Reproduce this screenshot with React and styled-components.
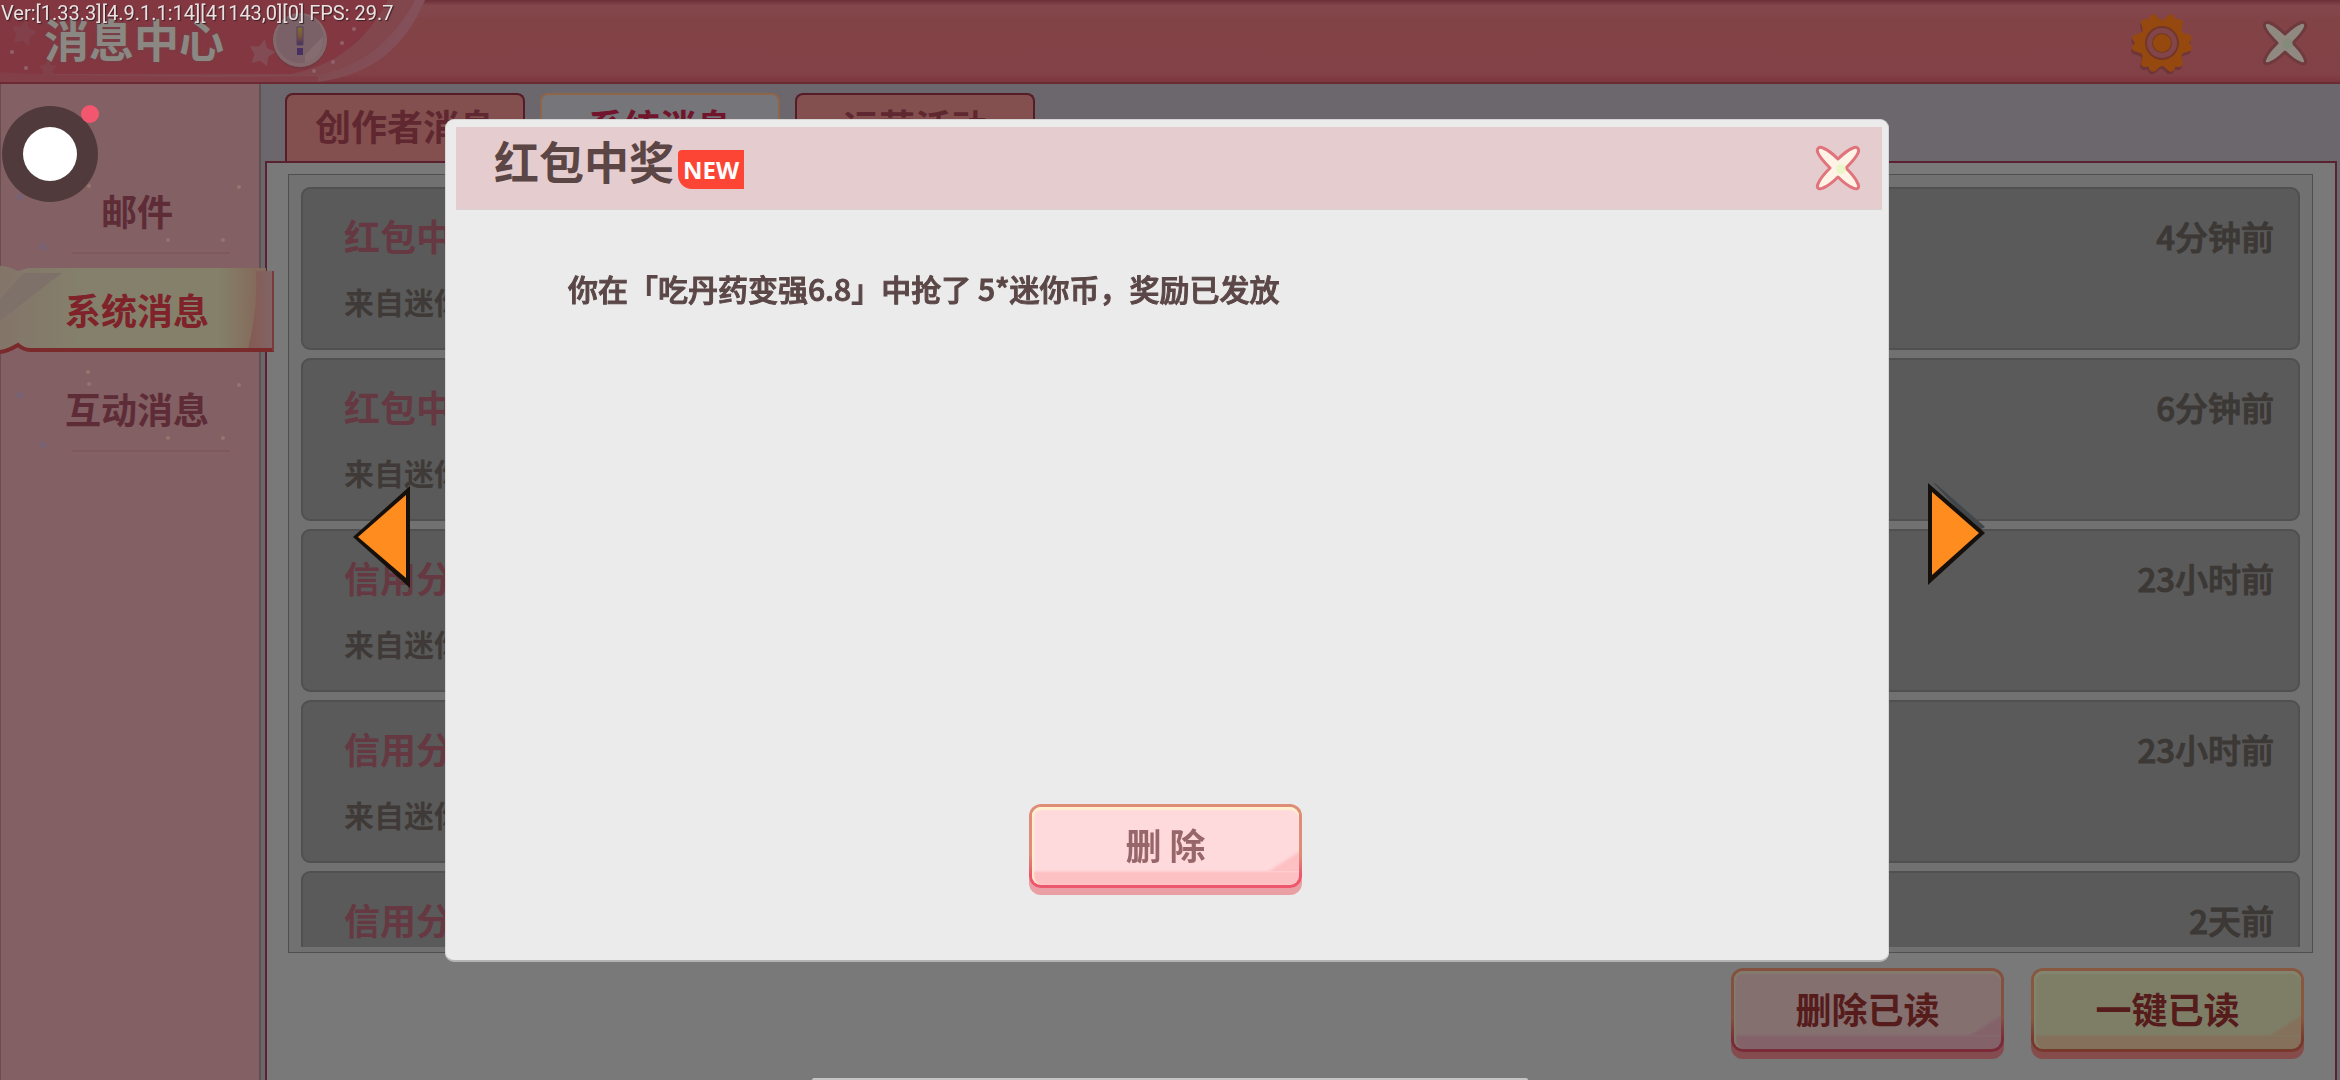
import styled, { createGlobalStyle, css } from "styled-components";

const GlobalStyle = createGlobalStyle`
    * {
        box-sizing: border-box;
    }
    body {
        margin: 0;
        overflow: hidden;
        background: #6c676c;
        font-family: "Noto Sans CJK SC", "Noto Sans", sans-serif;
        font-weight: 700;
    }
    button {
        padding: 0;
        border: 0;
        background: none;
        color: inherit;
        font: inherit;
        cursor: pointer;
    }
    h1, h2, h3, p {
        margin: 0;
        font-weight: inherit;
    }
    svg {
        display: block;
    }
`;

const Page = styled.div`
    display: flex;
    flex-direction: column;
    height: 100vh;
`;

const TopBar = styled.header`
    position: relative;
    display: flex;
    align-items: center;
    height: 84px;
    flex: none;
    padding: 0 32px 0 44px;
    border-bottom: 2px solid #6b2a34;
    background: linear-gradient(#6d2f39, #83484c 6px, #824347 20px, #824146 74px, #7d353d);
`;

const TopBarArt = styled.svg`
    position: absolute;
    left: 0;
    top: 0;
`;

const PageTitle = styled.h1`
    position: relative;
    padding-bottom: 4px;
    font-size: 45px;
    line-height: 78px;
    color: #8b8883;
    text-shadow: 0 0 3px #6b4a4c;
`;

const HelpButton = styled.button`
    position: relative;
    margin-left: 47px;
    padding-bottom: 2px;
`;

const TopActions = styled.div`
    display: flex;
    align-items: center;
    gap: 69px;
    margin-left: auto;
    padding-top: 4px;
`;

const Body = styled.div`
    display: flex;
    flex: 1;
    min-height: 0;
`;

const Sidebar = styled.nav`
    position: relative;
    z-index: 1;
    width: 261px;
    flex: none;
    padding-top: 76px;
    border-left: 1px solid #6c4c50;
    border-right: 2px solid #5f5152;
    background: #826064;
`;

const SideItem = styled.button`
    position: relative;
    display: block;
    width: 272px;
    height: 99px;
    font-size: 36px;
    line-height: 98px;
    color: ${(p) => (p.$active ? "#7f2229" : "#5d2c36")};
`;

const SideArt = styled.svg`
    position: absolute;
    left: -1px;
    top: 0;
`;

const SideLabel = styled.span`
    position: relative;
`;

const Main = styled.main`
    display: flex;
    flex-direction: column;
    flex: 1;
    min-width: 0;
    padding: 9px 3px 0 4px;
    background: #6c676c;
`;

const Tabs = styled.div`
    display: flex;
    gap: 15px;
    padding-left: 20px;
`;

const Tab = styled.button`
    width: 240px;
    height: 68px;
    padding-bottom: 6px;
    border: 2px solid ${(p) => (p.$active ? "#8f6549" : "#551c28")};
    border-bottom: 0;
    border-radius: 8px 8px 0 0;
    background: ${(p) => (p.$active ? "#76767a" : "#84504f")};
    font-size: 36px;
    line-height: 60px;
    color: ${(p) => (p.$active ? "#70152b" : "#5f2730")};
`;

const Panel = styled.section`
    display: flex;
    flex-direction: column;
    flex: 1;
    min-height: 0;
    padding: 11px 22px 20px 21px;
    border: 2px solid #5a2230;
    border-bottom: 0;
    background: #797979;
`;

const ListFrame = styled.div`
    flex: 1;
    min-height: 0;
    padding: 12px 12px 5px;
    border: 1px solid #4f4f4f;
    background: #717171;
`;

const List = styled.div`
    display: flex;
    flex-direction: column;
    gap: 8px;
    height: 100%;
    overflow: hidden;
`;

const Message = styled.article`
    display: flex;
    flex: none;
    align-items: flex-start;
    justify-content: space-between;
    height: 163px;
    padding: 24px 24px 0 41px;
    border: 2px solid #505050;
    border-radius: 9px;
    background: #5a5a5a;
`;

const MessageText = styled.div`
    display: flex;
    flex-direction: column;
    gap: 22px;
`;

const MessageTitle = styled.h3`
    font-size: 36px;
    line-height: 44px;
    color: #653842;
`;

const MessageFrom = styled.p`
    font-size: 30px;
    line-height: 44px;
    color: #3f3a37;
`;

const MessageTime = styled.time`
    font-size: 33px;
    line-height: 46px;
    font-weight: 500;
    color: #3c3835;
    -webkit-text-stroke: 1px #3c3835;
`;

const Footer = styled.div`
    display: flex;
    justify-content: flex-end;
    gap: 27px;
    padding: 15px 9px 8px 0;
`;

const tones = {
    pink: {
        face: "#ffdadd",
        low: "#fec1c3",
        shine: "#fff0cf",
        top: "#e08d78",
        bottom: "#ee566c",
        shadow: "#e99fa3",
        text: "#96666b",
    },
    dimPink: {
        face: "#84706f",
        low: "#84626a",
        shine: "#847b6c",
        top: "#84503f",
        bottom: "#7b2b38",
        shadow: "#854c50",
        text: "#561b1b",
    },
    dimYellow: {
        face: "#7e7e67",
        low: "#84705b",
        shine: "#84856f",
        top: "#87583f",
        bottom: "#79382c",
        shadow: "#854c4b",
        text: "#561b1b",
    },
};

const GameButton = styled.button`
    width: 273px;
    height: 84px;
    padding-bottom: 4px;
    border: 3px solid transparent;
    border-radius: 12px;
    font-size: 36px;
    line-height: 72px;
    ${({ $tone }) => {
        const t = tones[$tone];
        return css`
            color: ${t.text};
            background:
                linear-gradient(to bottom right, transparent 50%, ${t.low} 62%) right bottom 14px / 34px 22px no-repeat padding-box,
                linear-gradient(${t.face} 63px, ${t.low} 66px) padding-box,
                linear-gradient(${t.top} 60%, ${t.bottom} 85%) border-box;
            box-shadow: inset 0 3px 1px ${t.shine}, inset 3px 0 2px -1px ${t.shine}, 0 7px 0 ${t.shadow};
        `;
    }}
`;

const Overlay = styled.div`
    position: fixed;
    inset: 0;
    z-index: 2;
    display: flex;
    align-items: center;
    padding: 119px 355px 118px 353px;
`;

const PagerButton = styled.button`
    flex: none;
    margin: ${(p) => (p.$side === "left" ? "0 35px 0 0" : "0 0 0 39px")};
`;

const Dialog = styled.section`
    display: flex;
    flex-direction: column;
    flex: 1;
    align-self: stretch;
    padding: 7px 6px 65px 10px;
    border: 1px solid #d6d4d4;
    border-bottom: 2px solid #b4b4b4;
    border-radius: 9px;
    background: #ebebeb;
`;

const DialogHead = styled.header`
    display: flex;
    align-items: center;
    height: 83px;
    padding: 0 21px 0 38px;
    border-bottom: 1px solid #dcd2d3;
    background: #e5cdcf;
`;

const DialogTitle = styled.h2`
    padding-bottom: 14px;
    font-size: 45px;
    line-height: 68px;
    color: #5b4545;
`;

const NewBadge = styled.span`
    width: 66px;
    height: 39px;
    margin: 2px 0 0 4px;
    border-radius: 4px 0 0 14px;
    background: #fd4536;
    color: #fff;
    font-family: "Open Sans", sans-serif;
    font-size: 24px;
    line-height: 39px;
    text-align: center;
`;

const CloseButton = styled.button`
    margin-left: auto;
`;

const DialogText = styled.p`
    flex: 1;
    padding: 56px 112px 0;
    font-size: 30px;
    line-height: 44px;
    font-weight: 500;
    color: #5b4747;
    -webkit-text-stroke: 1px #5b4747;
`;

const DialogActions = styled.div`
    display: flex;
    justify-content: center;
    padding: 0 7px 7px 0;
`;

const VersionText = styled.p`
    position: fixed;
    left: 1px;
    top: 0;
    z-index: 3;
    font-family: Roboto, sans-serif;
    font-size: 20px;
    line-height: 26px;
    font-weight: 400;
    color: #e9e1e1;
    text-shadow: 1px 1px 1px #3a2024;
`;

const RecordButton = styled.button`
    position: fixed;
    left: 2px;
    top: 104px;
    z-index: 3;
`;

const HomeLine = styled.div`
    position: fixed;
    left: 50%;
    bottom: 0;
    z-index: 3;
    width: 716px;
    height: 2px;
    margin-left: -358px;
    border-radius: 2px 2px 0 0;
    background: #c4c4c4;
`;

const starPath = "M0-13 4-5 13-3 7 4 8 13 0 9-8 13-7 4-13-3-4-5Z";

const TopArt = () => (
    <TopBarArt width="440" height="82" viewBox="0 0 440 82" aria-hidden="true">
        <defs>
            <linearGradient id="bandFade" x1="0" x2="1">
                <stop offset="0" stopColor="#83404a" />
                <stop offset="0.7" stopColor="#814a50" />
                <stop offset="1" stopColor="#84505a" />
            </linearGradient>
        </defs>
        <path d="M0 0H425C405 46 375 74 318 82H0Z" fill="url(#bandFade)" />
        <path d="M0 0H415C392 42 362 66 318 75H0Z" fill="#82464d" />
        <path d="M0 0H388C366 42 334 66 290 74H0Z" fill="#833741" />
        <path d="M0 72C90 78 220 78 318 76V82H0Z" fill="#833f48" />
        <path d={starPath} transform="translate(262 52) rotate(12)" fill="#834b54" />
        <path d={starPath} transform="translate(24 32) rotate(12)" fill="#81404a" />
        <path d={starPath} transform="translate(48 68) scale(.7)" fill="#81404a" />
        {[[12, 52], [26, 68], [314, 71], [333, 62], [342, 43], [354, 29]].map(([x, y]) => (
            <circle key={x} cx={x} cy={y} r="2" fill="#90636a" />
        ))}
    </TopBarArt>
);

const HelpIcon = () => (
    <svg width="58" height="58" viewBox="0 0 58 58" aria-hidden="true">
        <defs>
            <linearGradient id="mark" x1="0" x2="0" y1="0" y2="1">
                <stop offset="0" stopColor="#82702f" />
                <stop offset="0.55" stopColor="#76523c" />
                <stop offset="1" stopColor="#453066" />
            </linearGradient>
        </defs>
        <circle cx="29" cy="31" r="27" fill="#713a43" />
        <circle cx="29" cy="29" r="27" fill="#83696c" />
        <circle cx="29" cy="28" r="24" fill="#7a6167" />
        <path d="M34 44 52 25A24 24 0 0 1 34 52Z" fill="#846c70" />
        <path d="M26 16h6v18h-6z" fill="url(#mark)" stroke="#544063" strokeWidth="1" />
        <path d="M26 37h6v7h-6z" fill="#452f63" />
    </svg>
);

const gearTooth = "M-13-17Q-9-22-8-28-5-32 0-27 5-32 8-28 9-22 13-17L0 0Z";
const gearTeeth = [30, 90, 150, 210, 270, 330];

const GearIcon = () => (
    <svg width="62" height="62" viewBox="-31 -31 62 62" aria-hidden="true">
        <g fill="#6f3539" transform="translate(-1 3)">
            {gearTeeth.map((a) => (
                <path key={a} d={gearTooth} transform={`rotate(${a})`} />
            ))}
            <circle r="21" />
        </g>
        <g fill="#96490f">
            {gearTeeth.map((a) => (
                <path key={a} d={gearTooth} transform={`rotate(${a})`} />
            ))}
            <circle r="21" />
        </g>
        <circle r="17" fill="#743628" />
        <circle r="15" fill="#82454a" />
        <circle r="10" fill="#74391f" />
        <circle r="9" fill="#96490f" />
    </svg>
);

const CrossIcon = ({ fill, stroke, glow }) => (
    <svg width="46" height="46" viewBox="-23 -23 46 46" aria-hidden="true">
        <path
            d="M0-9C5-14 10-18 15-20 19-22 22-19 20-15 18-10 13-5 8 0 13 5 18 10 20 16 22 20 19 22 15 20 10 18 5 14 0 9-5 14-10 18-15 20-19 22-22 20-20 16-18 10-13 5-8 0-13-5-18-10-20-15-22-19-19-22-15-20-10-18-5-14 0-9Z"
            fill={fill}
            stroke={stroke}
            strokeWidth="3"
            strokeLinejoin="round"
        />
        <circle cx="3" cy="1" r="5" fill={glow} opacity=".7" />
    </svg>
);

const PagerArrow = ({ side }) => (
    <svg width="57" height="116" viewBox="0 0 57 116" aria-hidden="true">
        {side === "left" ? (
            <>
                <path d="M0 54 57 3V105Z" fill="#15100c" />
                <path d="M5 54 53 12V95Z" fill="#ff8c1e" />
            </>
        ) : (
            <>
                <path d="M0-6 57 44 50 48Z" fill="#41464a" />
                <path d="M0 0 57 50 0 102Z" fill="#15100c" />
                <path d="M4 9 51 50 4 92Z" fill="#ff8c1e" />
            </>
        )}
    </svg>
);

const SparkleArt = () => (
    <SideArt width="261" height="99" viewBox="0 0 261 99" aria-hidden="true">
        {[[88, 14], [89, 26], [239, 27], [168, 80], [223, 80]].map(([x, y]) => (
            <circle key={`${x}-${y}`} cx={x} cy={y} r="2" fill="#957570" />
        ))}
        <circle cx="20" cy="37" r="4" fill="#7b6270" />
        <circle cx="43" cy="87" r="4" fill="#7b6270" />
        <path d="M72 93H230" stroke="#7b5156" />
    </SideArt>
);

const BannerArt = () => (
    <SideArt width="275" height="99" viewBox="0 0 275 99" aria-hidden="true">
        <defs>
            <linearGradient id="banner" x1="0" x2="1">
                <stop offset="0" stopColor="#837569" />
                <stop offset="0.3" stopColor="#84806b" />
                <stop offset="0.8" stopColor="#84806a" />
                <stop offset="0.93" stopColor="#856b5b" />
            </linearGradient>
            <linearGradient id="bannerEdge" x1="0" x2="1">
                <stop offset="0" stopColor="#845a52" />
                <stop offset="1" stopColor="#826567" />
            </linearGradient>
        </defs>
        <path d="M0 7Q8 7 18 12L28 9H266V12H274V90H28Q18 84 12 89 6 92 0 92Z" fill="url(#banner)" />
        <path d="M24 14H62L42 29 0 62V40Z" fill="#7d7169" />
        <path d="M256 12H274V90H248Q258 50 256 12Z" fill="url(#bannerEdge)" />
        <path d="M0 93Q8 92 18 86 24 91 30 91H274" fill="none" stroke="#7b2a2c" strokeWidth="4" />
        <path d="M273 12V92" stroke="#7b3a3c" strokeWidth="2" />
    </SideArt>
);

const sideItems = ["邮件", "系统消息", "互动消息"];
const tabItems = ["创作者消息", "系统消息", "运营活动"];
const messages = [
    { title: "红包中奖", from: "来自迷你", time: "4分钟前" },
    { title: "红包中奖", from: "来自迷你", time: "6分钟前" },
    { title: "信用分", from: "来自迷你", time: "23小时前" },
    { title: "信用分", from: "来自迷你", time: "23小时前" },
    { title: "信用分", time: "2天前" },
];

const MessageItem = ({ title, from, time }) => (
    <Message>
        <MessageText>
            <MessageTitle>{title}</MessageTitle>
            {from && <MessageFrom>{from}</MessageFrom>}
        </MessageText>
        <MessageTime>{time}</MessageTime>
    </Message>
);

const RewardDialog = () => (
    <Overlay>
        <PagerButton $side="left" aria-label="上一条">
            <PagerArrow side="left" />
        </PagerButton>
        <Dialog role="dialog" aria-labelledby="dialog-title">
            <DialogHead>
                <DialogTitle id="dialog-title">红包中奖</DialogTitle>
                <NewBadge>NEW</NewBadge>
                <CloseButton aria-label="关闭">
                    <CrossIcon fill="#fff3e6" stroke="#e0737b" glow="#e2f6bd" />
                </CloseButton>
            </DialogHead>
            <DialogText>你在「吃丹药变强6.8」中抢了 5*迷你币，奖励已发放</DialogText>
            <DialogActions>
                <GameButton $tone="pink">删 除</GameButton>
            </DialogActions>
        </Dialog>
        <PagerButton $side="right" aria-label="下一条">
            <PagerArrow side="right" />
        </PagerButton>
    </Overlay>
);

const App = () => {
    return (
        <>
            <GlobalStyle />
            <Page>
                <TopBar>
                    <TopArt />
                    <PageTitle>消息中心</PageTitle>
                    <HelpButton aria-label="说明">
                        <HelpIcon />
                    </HelpButton>
                    <TopActions>
                        <button aria-label="设置">
                            <GearIcon />
                        </button>
                        <button aria-label="关闭消息中心">
                            <CrossIcon fill="#8f8982" stroke="#6f3a3e" glow="#7f8c76" />
                        </button>
                    </TopActions>
                </TopBar>

                <Body>
                    <Sidebar>
                        {sideItems.map((label) => {
                            const active = label === "系统消息";
                            return (
                                <SideItem key={label} $active={active}>
                                    {active ? <BannerArt /> : <SparkleArt />}
                                    <SideLabel>{label}</SideLabel>
                                </SideItem>
                            );
                        })}
                    </Sidebar>

                    <Main>
                        <Tabs>
                            {tabItems.map((label) => (
                                <Tab key={label} $active={label === "系统消息"}>
                                    {label}
                                </Tab>
                            ))}
                        </Tabs>
                        <Panel>
                            <ListFrame>
                                <List>
                                    {messages.map((m, i) => (
                                        <MessageItem key={i} {...m} />
                                    ))}
                                </List>
                            </ListFrame>
                            <Footer>
                                <GameButton $tone="dimPink">删除已读</GameButton>
                                <GameButton $tone="dimYellow">一键已读</GameButton>
                            </Footer>
                        </Panel>
                    </Main>
                </Body>
            </Page>

            <RewardDialog />

            <VersionText>Ver:[1.33.3][4.9.1.1:14][41143,0][0] FPS: 29.7</VersionText>
            <RecordButton aria-label="录制">
                <svg width="100" height="100" viewBox="0 0 100 100" aria-hidden="true">
                    <circle cx="48" cy="50" r="48" fill="#503a3b" />
                    <circle cx="48" cy="50" r="27" fill="#fff" />
                    <circle cx="88" cy="10" r="9" fill="#f3576f" />
                </svg>
            </RecordButton>
            <HomeLine />
        </>
    );
};

export default App;
